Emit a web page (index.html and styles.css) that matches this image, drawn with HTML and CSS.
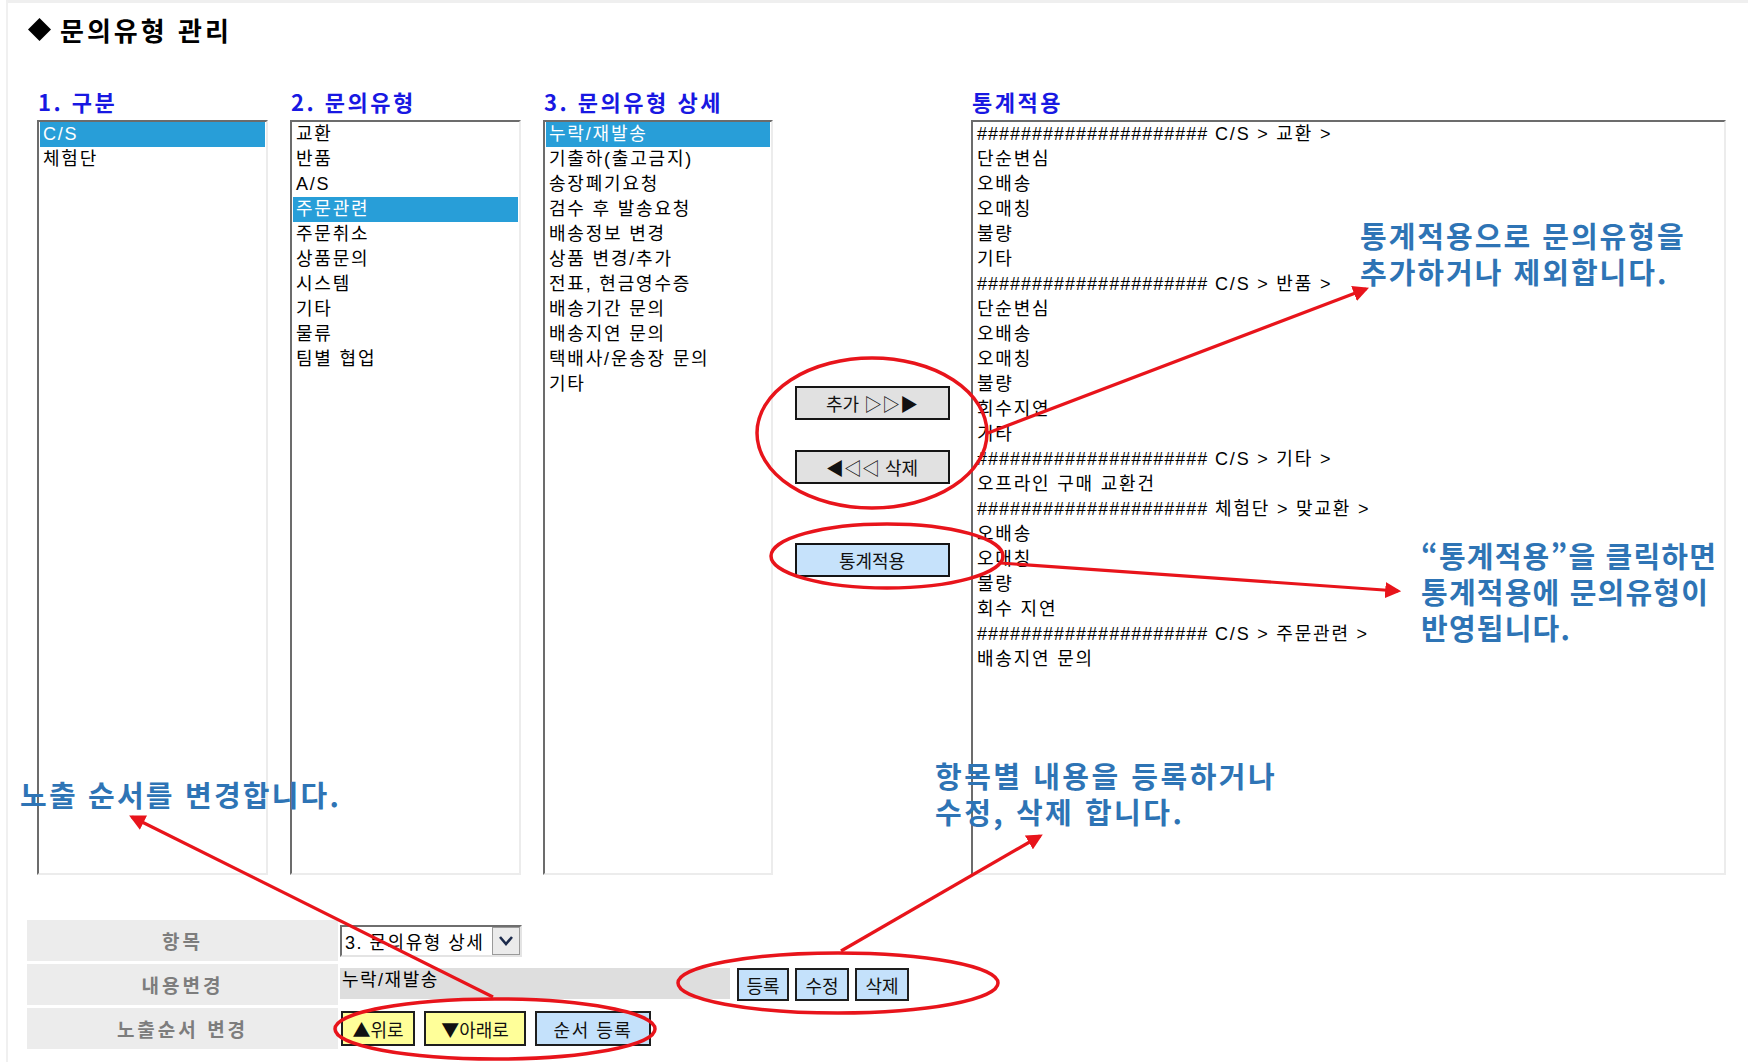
FILE: index.html
```html
<!DOCTYPE html>
<html lang="ko">
<head>
<meta charset="utf-8">
<title>문의유형 관리</title>
<link rel="stylesheet" href="styles.css">
</head>
<body>
<div class="page">
  <h1 class="title">
    <svg class="dia" width="25" height="25" viewBox="0 0 25 25"><polygon points="12.5,1 24,12.5 12.5,24 1,12.5" fill="#000"/></svg>
    <span>문의유형 관리</span>
  </h1>

  <div class="lists">
    <div class="col">
      <div class="col-head">1. 구분</div>
      <div class="listbox">
        <div class="opt sel">C/S</div>
        <div class="opt">체험단</div>
      </div>
    </div>
    <div class="col">
      <div class="col-head">2. 문의유형</div>
      <div class="listbox">
        <div class="opt">교환</div>
        <div class="opt">반품</div>
        <div class="opt">A/S</div>
        <div class="opt sel">주문관련</div>
        <div class="opt">주문취소</div>
        <div class="opt">상품문의</div>
        <div class="opt">시스템</div>
        <div class="opt">기타</div>
        <div class="opt">물류</div>
        <div class="opt">팀별 협업</div>
      </div>
    </div>
    <div class="col">
      <div class="col-head">3. 문의유형 상세</div>
      <div class="listbox">
        <div class="opt sel">누락/재발송</div>
        <div class="opt">기출하(출고금지)</div>
        <div class="opt">송장폐기요청</div>
        <div class="opt">검수 후 발송요청</div>
        <div class="opt">배송정보 변경</div>
        <div class="opt">상품 변경/추가</div>
        <div class="opt">전표, 현금영수증</div>
        <div class="opt">배송기간 문의</div>
        <div class="opt">배송지연 문의</div>
        <div class="opt">택배사/운송장 문의</div>
        <div class="opt">기타</div>
      </div>
    </div>
    <div class="mid">
      <button class="mbtn mbtn-add">추가 ▷▷▶</button>
      <button class="mbtn mbtn-del">◀◁◁ 삭제</button>
      <button class="mbtn mbtn-stat">통계적용</button>
    </div>
    <div class="col col-wide">
      <div class="col-head">통계적용</div>
      <div class="listbox listbox-wide">
        <div class="opt"><span class="hash">#####################</span> C/S &gt; 교환 &gt;</div>
        <div class="opt">단순변심</div>
        <div class="opt">오배송</div>
        <div class="opt">오매칭</div>
        <div class="opt">불량</div>
        <div class="opt">기타</div>
        <div class="opt"><span class="hash">#####################</span> C/S &gt; 반품 &gt;</div>
        <div class="opt">단순변심</div>
        <div class="opt">오배송</div>
        <div class="opt">오매칭</div>
        <div class="opt">불량</div>
        <div class="opt">회수지연</div>
        <div class="opt">기타</div>
        <div class="opt"><span class="hash">#####################</span> C/S &gt; 기타 &gt;</div>
        <div class="opt">오프라인 구매 교환건</div>
        <div class="opt"><span class="hash">#####################</span> 체험단 &gt; 맞교환 &gt;</div>
        <div class="opt">오배송</div>
        <div class="opt">오매칭</div>
        <div class="opt">불량</div>
        <div class="opt">회수 지연</div>
        <div class="opt"><span class="hash">#####################</span> C/S &gt; 주문관련 &gt;</div>
        <div class="opt">배송지연 문의</div>
      </div>
    </div>
  </div>

  <div class="form">
    <div class="frow">
      <div class="lbl">항목</div>
      <div class="val">
        <div class="select">
          <span class="select-text">3. 문의유형 상세</span>
          <span class="select-btn"><svg width="16" height="12" viewBox="0 0 16 12"><path d="M2 2 L8 9 L14 2" fill="none" stroke="#1c2b4c" stroke-width="2.6"/></svg></span>
        </div>
      </div>
    </div>
    <div class="frow">
      <div class="lbl">내용변경</div>
      <div class="val">
        <div class="input">누락/재발송</div>
        <button class="sbtn sbtn-reg">등록</button>
        <button class="sbtn">수정</button>
        <button class="sbtn">삭제</button>
      </div>
    </div>
    <div class="frow">
      <div class="lbl">노출순서 변경</div>
      <div class="val val-order">
        <button class="obtn obtn-up">▲위로</button>
        <button class="obtn obtn-down">▼아래로</button>
        <button class="obtn obtn-save">순서 등록</button>
      </div>
    </div>
  </div>

  <div class="note note-1">통계적용으로 문의유형을<br>추가하거나 제외합니다.</div>
  <div class="note note-2">“통계적용”을 클릭하면<br>통계적용에 문의유형이<br>반영됩니다.</div>
  <div class="note note-3">항목별 내용을 등록하거나<br>수정, 삭제 합니다.</div>
  <div class="note note-4">노출 순서를 변경합니다.</div>

  <svg class="overlay" width="1748" height="1062" viewBox="0 0 1748 1062">
    <defs>
      <marker id="ah" markerWidth="5" markerHeight="5" refX="4" refY="2.5" orient="auto" markerUnits="strokeWidth">
        <path d="M0,0 L5,2.5 L0,5 z" fill="#e8141b"/>
      </marker>
    </defs>
    <g fill="none" stroke="#e8141b" stroke-width="3.5">
      <ellipse cx="872" cy="433" rx="115" ry="75"/>
      <ellipse cx="887" cy="556" rx="116" ry="32"/>
      <ellipse cx="838" cy="983" rx="160" ry="30"/>
      <ellipse cx="495" cy="1029" rx="160" ry="30"/>
    </g>
    <g stroke="#e8141b" stroke-width="3.2">
      <line x1="988" y1="433" x2="1366" y2="289" marker-end="url(#ah)"/>
      <line x1="1000" y1="563" x2="1398" y2="591" marker-end="url(#ah)"/>
      <line x1="841" y1="951" x2="1040" y2="836" marker-end="url(#ah)"/>
      <line x1="493" y1="997" x2="132" y2="817" marker-end="url(#ah)"/>
    </g>
  </svg>
</div>
</body>
</html>
```

FILE: styles.css
```css
* { box-sizing: border-box; }

html, body {
  margin: 0;
  padding: 0;
  background: #fff;
}

body {
  width: 1748px;
  height: 1062px;
  overflow: hidden;
  padding-left: 6px;
  font-family: "Liberation Sans", "Noto Sans CJK KR", sans-serif;
  color: #000;
}

.page {
  position: relative;
  height: 1062px;
  border-top: 3px solid #efefef;
  border-left: 2px solid #f0f0f0;
}

.title {
  margin: 8px 0 0;
  padding-left: 19px;
  height: 37px;
  display: flex;
  align-items: center;
  gap: 8px;
  font-family: "Noto Sans CJK KR", sans-serif;
  font-size: 26px;
  font-weight: 700;
  letter-spacing: 3px;
  line-height: 37px;
}

.dia { display: block; flex: none; }

.lists {
  display: flex;
  margin-top: 41px;
  padding-left: 29px;
}

.col {
  width: 231px;
  margin-right: 22px;
  flex: none;
}

.col:nth-child(3) { width: 230px; margin-right: 0; }

.col-head {
  height: 24px;
  line-height: 24px;
  margin-bottom: 7px;
  padding-left: 1px;
  font-family: "Noto Sans CJK KR", sans-serif;
  font-size: 22px;
  font-weight: 700;
  letter-spacing: 2.5px;
  color: #1818e2;
  white-space: nowrap;
}

.listbox {
  height: 755px;
  background: #fff;
  border-top: 2px solid #6c6c6c;
  border-left: 2px solid #6c6c6c;
  border-right: 2px solid #ececec;
  border-bottom: 2px solid #ececec;
  padding: 0 1px;
  overflow: hidden;
}

.opt {
  height: 25px;
  line-height: 25px;
  padding-left: 3px;
  font-size: 18px;
  letter-spacing: 1.8px;
  white-space: nowrap;
}

.opt.sel {
  background: #289ed8;
  color: #fff;
}

.hash { letter-spacing: 1px; }

.mid {
  width: 198px;
  flex: none;
  display: flex;
  flex-direction: column;
  align-items: center;
}

.mbtn {
  width: 155px;
  height: 34px;
  border: 2px solid #151515;
  background: #e1e1e1;
  font-family: "Noto Sans CJK KR", sans-serif;
  font-size: 18px;
  line-height: 28px;
  padding: 0;
  color: #111;
}

.mbtn-add { margin-top: 297px; }
.mbtn-del { margin-top: 30px; }
.mbtn-stat { margin-top: 59px; background: #c6e2fb; }

.col-wide {
  width: 755px;
  margin-right: 0;
}

.form {
  margin-top: 45px;
  padding-left: 19px;
  display: flex;
  flex-direction: column;
  gap: 3px;
}

.frow {
  display: flex;
  height: 41px;
  gap: 2px;
}

.lbl {
  width: 311px;
  flex: none;
  background: #ececec;
  display: flex;
  align-items: center;
  justify-content: center;
  font-family: "Noto Sans CJK KR", sans-serif;
  font-size: 19px;
  font-weight: 700;
  letter-spacing: 3px;
  color: #7d7d7d;
}

.val {
  display: flex;
  align-items: center;
}

.select {
  width: 182px;
  height: 32px;
  display: flex;
  align-items: center;
  border-top: 2px solid #6e6e6e;
  border-left: 2px solid #6e6e6e;
  border-right: 2px solid #e4e4e4;
  border-bottom: 2px solid #e4e4e4;
  background: #fff;
  padding-left: 3px;
}

.select-text {
  flex: 1;
  font-size: 18px;
  letter-spacing: 1.5px;
  white-space: nowrap;
}

.select-btn {
  width: 28px;
  height: 28px;
  display: flex;
  align-items: center;
  justify-content: center;
  background: #ebebeb;
  border: 1px solid #9a9a9a;
}

.input {
  width: 390px;
  height: 31px;
  background: #dedede;
  font-size: 18px;
  letter-spacing: 1.5px;
  line-height: 24px;
  padding-left: 2px;
  margin-top: -2px;
}

.sbtn {
  height: 33px;
  width: 54px;
  margin-left: 6px;
  padding: 0;
  border: 2px solid #1e1e1e;
  background: #c4e1fb;
  font-family: "Noto Sans CJK KR", sans-serif;
  font-size: 18px;
  color: #111;
}

.sbtn-reg { width: 52px; margin-left: 7px; }

.val-order { padding-left: 1px; gap: 9px; }

.obtn {
  height: 35px;
  padding: 0;
  border: 2px solid #1e1e1e;
  background: #ffff99;
  font-family: "Noto Sans CJK KR", sans-serif;
  font-size: 18px;
  color: #111;
}

.obtn-up { width: 74px; }
.obtn-down { width: 102px; }
.obtn-save { width: 116px; background: #c4e1fb; letter-spacing: 1.5px; }

.note {
  position: absolute;
  font-family: "Noto Sans CJK KR", sans-serif;
  font-size: 29px;
  font-weight: 700;
  line-height: 36px;
  color: #2e74b5;
  white-space: nowrap;
}

.note-1 { left: 1352px; top: 214px; letter-spacing: 2px; }
.note-2 { left: 1413px; top: 534px; letter-spacing: 1.2px; }
.note-3 { left: 927px; top: 754px; letter-spacing: 2.5px; }
.note-4 { left: 12px; top: 773px; letter-spacing: 2.2px; }

.overlay {
  position: absolute;
  left: -8px;
  top: -3px;
  pointer-events: none;
}
```
